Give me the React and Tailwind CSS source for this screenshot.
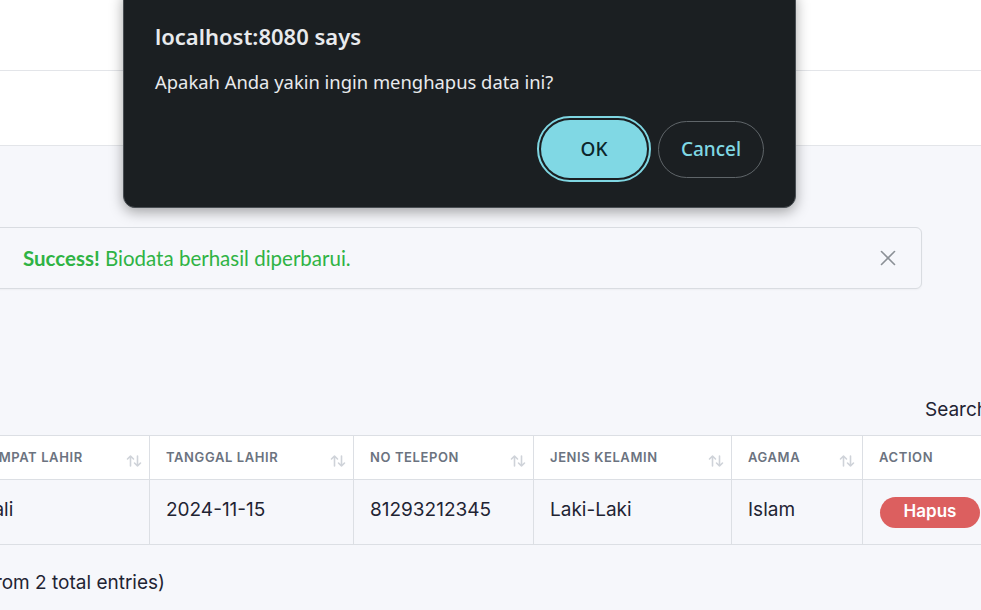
import { X } from 'lucide-react';

const columns = [
  { label: 'Tempat Lahir', width: 185, sort: true },
  { label: 'Tanggal Lahir', width: 204, sort: true },
  { label: 'No Telepon', width: 180, sort: true },
  { label: 'Jenis Kelamin', width: 198, sort: true },
  { label: 'Agama', width: 131, sort: true },
  { label: 'Action', width: 160, sort: false },
];

const row = ['Bali', '2024-11-15', '81293212345', 'Laki-Laki', 'Islam'];

function SortIcon() {
  return (
    <svg width="16" height="14" viewBox="0 0 16 14" fill="none" stroke="#cfd3d9" strokeWidth="1.6" strokeLinecap="round" strokeLinejoin="round">
      <path d="M4.5 12V2M1.5 5l3-3 3 3" />
      <path d="M11.5 2v10M8.5 9l3 3 3-3" />
    </svg>
  );
}

function ConfirmDialog() {
  return (
    <div
      className="absolute left-[123px] top-[-12px] w-[673px] h-[220px] bg-[#1b1f22] rounded-[12px] border border-[#4a4f54] shadow-[0_4px_14px_rgba(0,0,0,0.35)] pt-[33px] pl-[31px] pr-[31px]"
      style={{ fontFamily: '"Noto Sans", "Open Sans", sans-serif' }}
    >
      <div className="text-[22px] leading-[28px] font-semibold text-[#e8eaed]">localhost:8080 says</div>
      <div className="mt-[20px] text-[18.4px] leading-[24px] text-[#e8eaed]">Apakah Anda yakin ingin menghapus data ini?</div>
      <div className="mt-[22px] flex justify-end items-center gap-[7px]">
        <div className="rounded-full border-2 border-[#7fd6e2] p-[2px]">
          <button className="w-[106px] h-[58px] rounded-full bg-[#80d8e4] text-[#0c262b] text-[19px] font-medium">OK</button>
        </div>
        <button className="w-[106px] h-[57px] rounded-full border border-[#5f6569] text-[#80d8e4] text-[19px] font-medium">Cancel</button>
      </div>
    </div>
  );
}

export default function App() {
  return (
    <div className="relative w-[981px] h-[610px] overflow-hidden bg-[#f6f7fb]" style={{ fontFamily: 'Inter, "Noto Sans", sans-serif' }}>
      {/* top bars */}
      <div className="h-[71px] bg-white border-b border-[#e3e5e9]" />
      <div className="h-[75px] bg-white border-b border-[#e3e5e9]" />

      {/* alert */}
      <div className="mt-[81px] ml-[-20px] w-[942px] h-[62px] rounded-[6px] border border-[#d9dce1] bg-[#f6f7fb] shadow-[0_1px_2px_rgba(0,0,0,0.04)] flex items-center pl-[42px] pr-[20px]">
        <div className="flex-1 text-[20.5px] text-[#2fb344]" style={{ fontFamily: 'Lato, "Noto Sans", sans-serif' }}>
          <span className="font-bold">Success!</span> Biodata berhasil diperbarui.
        </div>
        <X size={26} strokeWidth={1.5} className="text-[#8b9096]" />
      </div>

      {/* search */}
      <div className="mt-[109px] pl-[925px] text-[19px] leading-[24px] text-[#1f2433] whitespace-nowrap">Search:</div>

      {/* table */}
      <table className="mt-[13px] ml-[-36px] w-[1058px] min-w-[1058px] table-fixed border-collapse">
        <colgroup>
          {columns.map((c) => (
            <col key={c.label} style={{ width: c.width }} />
          ))}
        </colgroup>
        <thead>
          <tr className="bg-white h-[44px]">
            {columns.map((c) => (
              <th key={c.label} className="border border-[#dcdfe4] pl-[16px] pr-[7px] text-left align-middle">
                <div className="flex items-center justify-between">
                  <span className="uppercase text-[13px] font-semibold tracking-[0.6px] text-[#6b7380] whitespace-nowrap pt-[1px]">{c.label}</span>
                  {c.sort && <span className="mt-[7px]"><SortIcon /></span>}
                </div>
              </th>
            ))}
          </tr>
        </thead>
        <tbody>
          <tr className="h-[65px]">
            {row.map((v, i) => (
              <td key={i} className="border border-[#dcdfe4] pl-[16px] pb-[4px] text-[19px] text-[#1f2433] whitespace-nowrap">
                {v}
              </td>
            ))}
            <td className="border border-[#dcdfe4] pl-[17px]">
              <button className="w-[100px] h-[31px] rounded-full bg-[#dc5f5f] text-white text-[17px] font-semibold">Hapus</button>
            </td>
          </tr>
        </tbody>
      </table>

      {/* footer */}
      <div className="mt-[26px] w-[165px] flex justify-end whitespace-nowrap text-[19px] leading-[24px] text-[#1f2433]">
        Showing 1 to 1 of 1 entries (filtered from 2 total entries)
      </div>

      <ConfirmDialog />
    </div>
  );
}
